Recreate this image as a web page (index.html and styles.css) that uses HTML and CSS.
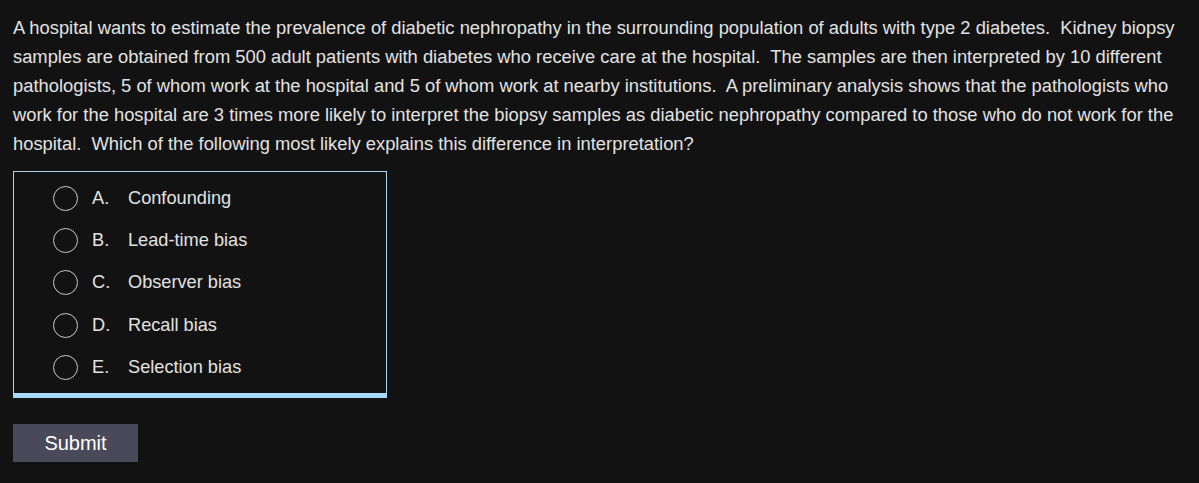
FILE: index.html
```html
<!DOCTYPE html>
<html>
<head>
<meta charset="utf-8">
<link rel="stylesheet" href="styles.css">
</head>
<body>
<div class="page">
<p class="stem">A hospital wants to estimate the prevalence of diabetic nephropathy in the surrounding population of adults with type 2 diabetes.  Kidney biopsy samples are obtained from 500 adult patients with diabetes who receive care at the hospital.  The samples are then interpreted by 10 different pathologists, 5 of whom work at the hospital and 5 of whom work at nearby institutions.  A preliminary analysis shows that the pathologists who work for the hospital are 3 times more likely to interpret the biopsy samples as diabetic nephropathy compared to those who do not work for the hospital.  Which of the following most likely explains this difference in interpretation?</p>
<div class="options">
  <div class="option"><span class="radio"></span><span class="letter">A.</span><span class="text">Confounding</span></div>
  <div class="option"><span class="radio"></span><span class="letter">B.</span><span class="text">Lead-time bias</span></div>
  <div class="option"><span class="radio"></span><span class="letter">C.</span><span class="text">Observer bias</span></div>
  <div class="option"><span class="radio"></span><span class="letter">D.</span><span class="text">Recall bias</span></div>
  <div class="option"><span class="radio"></span><span class="letter">E.</span><span class="text">Selection bias</span></div>
</div>
<button class="submit">Submit</button>
</div>
</body>
</html>
```
FILE: styles.css
```css
html, body {
  margin: 0;
  padding: 0;
  background: #121212;
}
.page {
  padding: 13px 8px 13px 13px;
  font-family: "Liberation Sans", Arial, sans-serif;
  color: #e2e2e2;
}
.stem {
  margin: 0;
  font-size: 18.35px;
  line-height: 29px;
  white-space: pre-wrap;
}
.options {
  margin-top: 13px;
  width: 372px;
  border: 1px solid #a8d4f0;
  border-bottom: 5px solid #a6dbfb;
  padding: 5px 0;
  display: flex;
  flex-direction: column;
}
.option {
  height: 42.3px;
  display: flex;
  align-items: center;
  font-size: 18.2px;
}
.radio {
  box-sizing: border-box;
  width: 25px;
  height: 25px;
  border: 1.5px solid #c8c8c8;
  border-radius: 50%;
  margin-left: 39px;
  flex: none;
}
.letter {
  margin-left: 14px;
  width: 36px;
}
.submit {
  margin-top: 26px;
  display: block;
  width: 125px;
  height: 38px;
  background: #4a4959;
  color: #ffffff;
  border: none;
  font-family: "Liberation Sans", Arial, sans-serif;
  font-size: 20px;
  padding: 0;
}
```
